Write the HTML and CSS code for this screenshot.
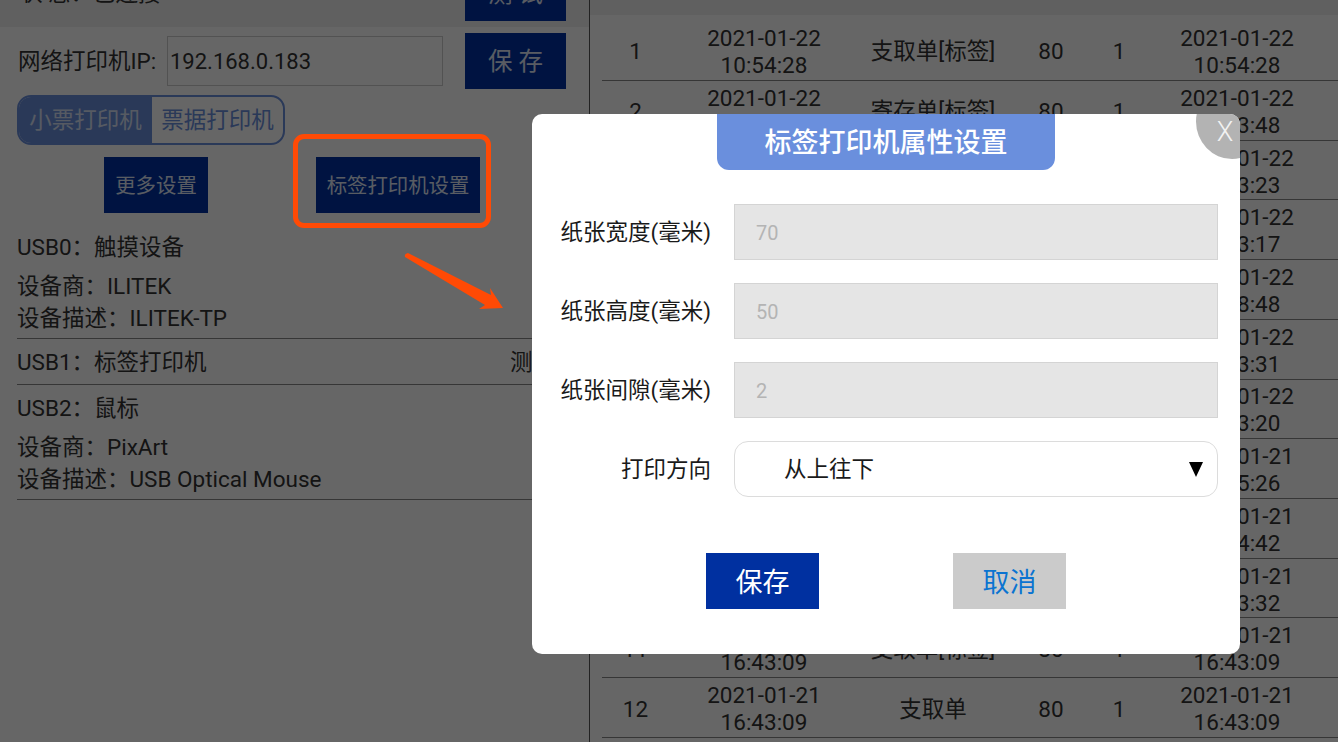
FILE: index.html
```html
<!DOCTYPE html>
<html lang="zh">
<head>
<meta charset="utf-8">
<title>打印机设置</title>
<link rel="stylesheet" href="styles.css">
</head>
<body>
<div class="page">
  <section class="left">
    <div class="status-row">
      <span class="status-text">状 态：已连接</span>
      <button class="btn btn-top btn-test">测 试</button>
    </div>
    <div class="ip-row">
      <span class="ip-label">网络打印机IP:</span>
      <div class="ip-input">192.168.0.183</div>
      <button class="btn btn-top">保 存</button>
    </div>
    <div class="segment">
      <span class="seg seg-on">小票打印机</span>
      <span class="seg">票据打印机</span>
    </div>
    <div class="more-row">
      <button class="btn btn-more">更多设置</button>
      <button class="btn btn-label">标签打印机设置</button>
    </div>
    <div class="usb usb-first">
      <div class="usb-title">USB0：触摸设备</div>
      <div class="usb-info">设备商：ILITEK</div>
      <div class="usb-info">设备描述：ILITEK-TP</div>
    </div>
    <div class="usb usb-mid">
      <div class="usb-title">USB1：标签打印机</div>
      <span class="usb-test">测试</span>
    </div>
    <div class="usb usb-last">
      <div class="usb-title">USB2：鼠标</div>
      <div class="usb-info">设备商：PixArt</div>
      <div class="usb-info">设备描述：USB Optical Mouse</div>
    </div>
  </section>
  <section class="right">
    <div class="thead"></div>
    <div class="row row-first"><span class="c1">1</span><span class="c2">2021-01-22<br>10:54:28</span><span class="c3">支取单[标签]</span><span class="c4">80</span><span class="c5">1</span><span class="c6">2021-01-22<br>10:54:28</span></div>
    <div class="row"><span class="c1">2</span><span class="c2">2021-01-22<br>10:53:48</span><span class="c3">寄存单[标签]</span><span class="c4">80</span><span class="c5">1</span><span class="c6">2021-01-22<br>10:53:48</span></div>
    <div class="row"><span class="c1">3</span><span class="c2">2021-01-22<br>10:53:23</span><span class="c3">支取单[标签]</span><span class="c4">80</span><span class="c5">1</span><span class="c6">2021-01-22<br>10:53:23</span></div>
    <div class="row"><span class="c1">4</span><span class="c2">2021-01-22<br>10:53:17</span><span class="c3">支取单[标签]</span><span class="c4">80</span><span class="c5">1</span><span class="c6">2021-01-22<br>10:53:17</span></div>
    <div class="row"><span class="c1">5</span><span class="c2">2021-01-22<br>10:48:48</span><span class="c3">支取单[标签]</span><span class="c4">80</span><span class="c5">1</span><span class="c6">2021-01-22<br>10:48:48</span></div>
    <div class="row"><span class="c1">6</span><span class="c2">2021-01-22<br>10:43:31</span><span class="c3">支取单[标签]</span><span class="c4">80</span><span class="c5">1</span><span class="c6">2021-01-22<br>10:43:31</span></div>
    <div class="row"><span class="c1">7</span><span class="c2">2021-01-22<br>10:43:20</span><span class="c3">支取单[标签]</span><span class="c4">80</span><span class="c5">1</span><span class="c6">2021-01-22<br>10:43:20</span></div>
    <div class="row"><span class="c1">8</span><span class="c2">2021-01-21<br>16:45:26</span><span class="c3">支取单[标签]</span><span class="c4">80</span><span class="c5">1</span><span class="c6">2021-01-21<br>16:45:26</span></div>
    <div class="row"><span class="c1">9</span><span class="c2">2021-01-21<br>16:44:42</span><span class="c3">支取单[标签]</span><span class="c4">80</span><span class="c5">1</span><span class="c6">2021-01-21<br>16:44:42</span></div>
    <div class="row"><span class="c1">10</span><span class="c2">2021-01-21<br>16:43:32</span><span class="c3">支取单[标签]</span><span class="c4">80</span><span class="c5">1</span><span class="c6">2021-01-21<br>16:43:32</span></div>
    <div class="row"><span class="c1">11</span><span class="c2">2021-01-21<br>16:43:09</span><span class="c3">支取单[标签]</span><span class="c4">80</span><span class="c5">1</span><span class="c6">2021-01-21<br>16:43:09</span></div>
    <div class="row"><span class="c1">12</span><span class="c2">2021-01-21<br>16:43:09</span><span class="c3">支取单</span><span class="c4">80</span><span class="c5">1</span><span class="c6">2021-01-21<br>16:43:09</span></div>
  </section>
</div>
<div class="overlay"></div>
<div class="callout-box"></div>
<svg class="callout-arrow" width="110" height="70" viewBox="0 0 110 70"><path d="M5 7 Q4 4 8 3 L91 45 L90 38 L103 58 L79 59 L85 55 Z" fill="#ff4a05"/></svg>
<div class="modal">
  <div class="modal-title">标签打印机属性设置</div>
  <div class="modal-close"><span class="close-x">X</span></div>
  <div class="form">
    <div class="form-row"><span class="form-label">纸张宽度(毫米)</span><div class="field field-off">70</div></div>
    <div class="form-row"><span class="form-label">纸张高度(毫米)</span><div class="field field-off">50</div></div>
    <div class="form-row"><span class="form-label">纸张间隙(毫米)</span><div class="field field-off">2</div></div>
    <div class="form-row"><span class="form-label">打印方向</span><div class="field field-select"><span>从上往下</span><span class="select-arrow"></span></div></div>
  </div>
  <div class="actions">
    <button class="mbtn mbtn-save">保存</button>
    <button class="mbtn mbtn-cancel">取消</button>
  </div>
</div>
</body>
</html>
```
FILE: styles.css
```css
* { box-sizing: border-box; }
html, body { margin: 0; height: 100%; overflow: hidden; }
body {
  background: #fff;
  color: #333;
  font-family: Roboto, "Noto Sans CJK SC", sans-serif;
  width: 1338px;
  height: 742px;
  position: relative;
}
button { font-family: inherit; border: 0; padding: 0; }
.page { display: flex; height: 742px; overflow: hidden; }
.left { width: 590px; height: 742px; border-right: 1px solid #555; flex: none; }
.status-row {
  height: 27px;
  background: #f0f0f0;
  display: flex;
  justify-content: space-between;
  align-items: flex-start;
  padding-right: 23px;
}
.status-text { font-size: 22.5px; line-height: 26px; padding-left: 20px; margin-top: -20px; white-space: nowrap; }
.btn { background: #0030a4; color: #dfe6f5; display: block; padding-bottom: 3px; }
.btn-top { width: 101px; height: 56px; font-size: 24.5px; flex: none; }
.btn-test { margin-top: -35px; }
.ip-row { display: flex; align-items: center; margin-top: 6px; height: 56px; padding-left: 18px; }
.ip-label { font-size: 22.5px; line-height: 26px; width: 149px; white-space: nowrap; padding-bottom: 1px; }
.ip-input {
  width: 276px; height: 50px; border: 1px solid #ccc; font-size: 22px; line-height: 49px; padding-left: 2px; margin-right: 22px; flex: none;
}
.segment {
  display: flex; margin: 6px 0 0 17px; width: 268px; height: 50px;
  border: 2px solid #6a8fdd; border-radius: 14px; overflow: hidden;
}
.seg { flex: 1; font-size: 22.5px; line-height: 46px; text-align: center; color: #6a8fdd; white-space: nowrap; }
.seg-on { background: #6a8fdd; color: #d8e2f6; flex: none; width: 133px; }
.more-row { display: flex; margin: 12px 0 0 104px; gap: 108px; }
.btn-more { width: 104px; height: 56px; font-size: 20.4px; }
.btn-label { width: 164px; height: 56px; font-size: 20.4px; white-space: nowrap; }
.usb { border-bottom: 1px solid #888; position: relative; margin-left: 17px; font-size: 22.5px; }
.usb-first { padding: 18px 0 4px; }
.usb-mid { height: 46px; padding-top: 7px; }
.usb-last { padding: 7px 0 4px; }
.usb-title { line-height: 32px; height: 32px; margin-bottom: 7px; }
.usb-info { line-height: 32px; }
.usb-test { position: absolute; left: 493px; top: 7px; line-height: 32px; }
.right { flex: 1; min-width: 0; padding-left: 12px; }
.thead { height: 15px; background: #f0f0f0; margin-left: -12px; margin-bottom: 8px; }
.row {
  display: flex; align-items: center; height: 59.72px; border-bottom: 1px solid #888; padding-top: 3px;
  font-size: 22.5px; line-height: 27px; text-align: center; width: 736px;
}
.row-first { height: 58px; padding-top: 0; }
.c1 { width: 67px; flex: none; }
.c2 { width: 190px; flex: none; }
.c3 { width: 148px; flex: none; white-space: nowrap; }
.c4 { width: 88px; flex: none; }
.c5 { width: 48px; flex: none; }
.c6 { width: 188px; flex: none; }
.overlay { position: absolute; inset: 0; background: rgba(0, 0, 0, 0.6); }
.callout-box {
  position: absolute; left: 293px; top: 134px; width: 198px; height: 94px;
  border: 5px solid #ff4a05; border-radius: 11px;
}
.callout-arrow { position: absolute; left: 400px; top: 250px; }
.modal {
  position: absolute; left: 532px; top: 114px; width: 708px; height: 540px;
  background: #fff; border-radius: 10px; overflow: hidden; color: #1a1a1a;
}
.modal-title {
  width: 338px; height: 56px; margin-left: 185px; background: #6a8fdd; color: #fff;
  border-radius: 0 0 12px 12px; font-size: 27px; font-weight: 500; line-height: 58px; text-align: center;
}
.modal-close {
  position: absolute; right: -28px; top: -30px; width: 72px; height: 75px; border-radius: 50%;
  background: #b3b3b3;
}
.close-x { position: absolute; left: 11px; top: 28px; width: 36px; text-align: center; color: #f2f2f2; font-size: 27px; line-height: 40px; font-weight: 300; }
.form { margin-top: 34px; display: flex; flex-direction: column; gap: 23px; }
.form-row { display: flex; align-items: center; height: 56px; }
.form-label { width: 179px; text-align: right; font-size: 22.5px; line-height: 26px; white-space: nowrap; padding-bottom: 1px; }
.field { margin-left: 23px; width: 484px; height: 56px; border: 1px solid #d4d4d4; font-size: 20px; line-height: 57px; padding-left: 21px; }
.field-off { background: #e5e5e5; color: #b4b4b4; }
.field-select { background: #fff; border: 1px solid #dcdcdc; border-radius: 14px; color: #1a1a1a; font-size: 22.5px; padding-left: 49px; display: flex; justify-content: space-between; align-items: center; padding-right: 14px; }
.select-arrow { width: 0; height: 0; border-left: 7px solid transparent; border-right: 7px solid transparent; border-top: 15px solid #000; }
.actions { display: flex; margin: 56px 0 0 174px; gap: 134px; }
.mbtn { width: 113px; height: 56px; font-size: 27px; padding-bottom: 2px; }
.mbtn-save { background: #0030a0; color: #fff; }
.mbtn-cancel { background: #cbcbcb; color: #0b74d1; }
```
